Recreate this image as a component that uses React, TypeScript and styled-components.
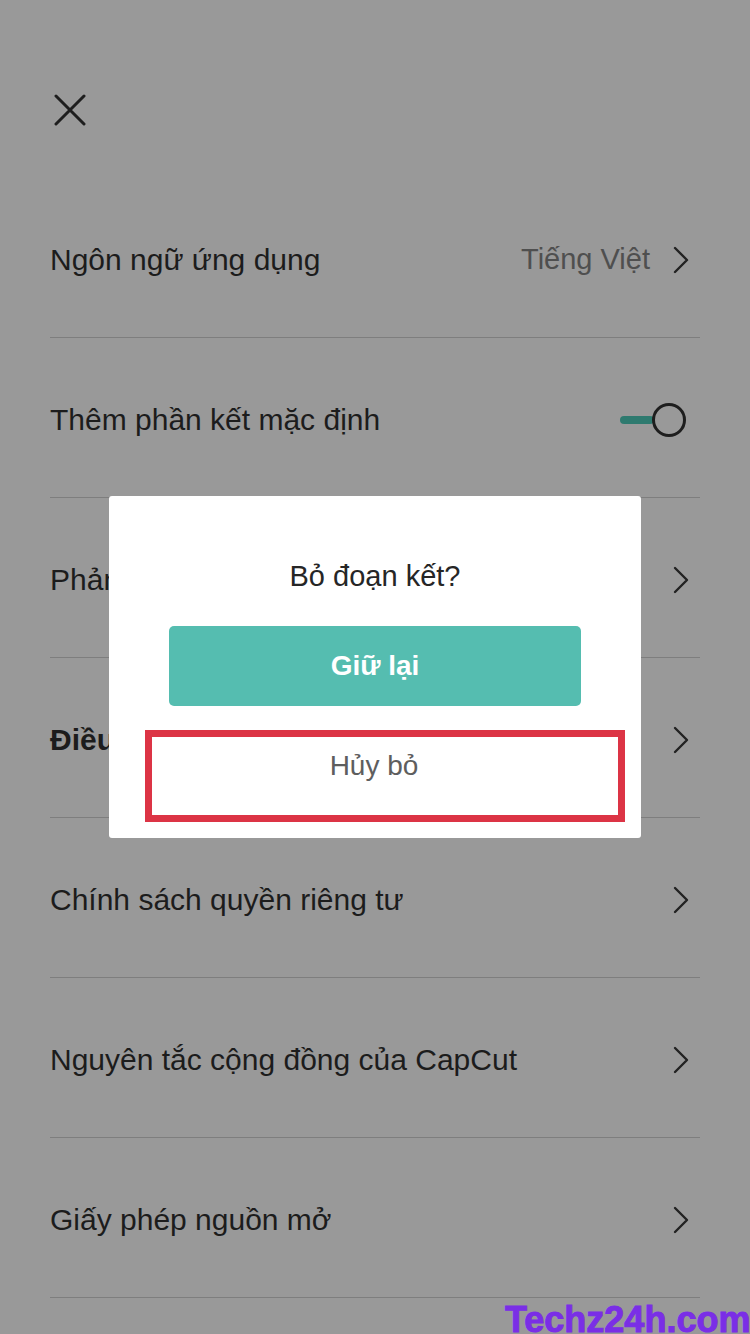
import React from "react";
import styled, { createGlobalStyle } from "styled-components";

const Global = createGlobalStyle`
  html, body { margin: 0; padding: 0; background: #999999; }
  body { font-family: "Liberation Sans", Arial, sans-serif; }
  * { box-sizing: border-box; }
`;

const Page = styled.div`
  position: relative;
  width: 750px;
  height: 1334px;
  overflow: hidden;
  background: #999999;
`;

const Header = styled.div`
  height: 178px;
  padding: 94px 0 0 54px;
`;

const CloseBtn = styled.div`
  width: 32px;
  height: 32px;
`;

const List = styled.div`
  padding: 0 50px;
`;

const Row = styled.div`
  display: flex;
  align-items: center;
  height: 160px;
  padding-top: 4px;
  border-bottom: 1px solid #7e7e7e;
`;

const Label = styled.div<{ $bold?: boolean }>`
  flex: 1;
  font-size: 30px;
  color: #1c1c1c;
  font-weight: ${(p) => (p.$bold ? 700 : 400)};
`;

const Value = styled.div`
  font-size: 29px;
  color: #4f4f4f;
  margin-right: 22px;
`;

const ChevronWrap = styled.div`
  width: 18px;
  height: 28px;
  margin-right: 10px;
  display: flex;
`;

const Toggle = styled.div`
  position: relative;
  width: 66px;
  height: 36px;
  margin-right: 14px;
`;

const Track = styled.div`
  position: absolute;
  left: 0;
  top: 14px;
  width: 34px;
  height: 8px;
  border-radius: 4px;
  background: #2e7a6f;
`;

const Knob = styled.div`
  position: absolute;
  right: 0;
  top: 1px;
  width: 34px;
  height: 34px;
  border-radius: 50%;
  border: 3px solid #1e1e1e;
`;

const Modal = styled.div`
  position: absolute;
  left: 109px;
  top: 496px;
  width: 532px;
  height: 342px;
  background: #ffffff;
  border-radius: 3px;
  display: flex;
  flex-direction: column;
  align-items: center;
  padding-top: 60px;
`;

const Title = styled.div`
  font-size: 29px;
  color: #262626;
  height: 40px;
  line-height: 40px;
`;

const KeepButton = styled.div`
  margin-top: 30px;
  width: 412px;
  height: 80px;
  background: #55bdb0;
  border-radius: 5px;
  color: #ffffff;
  font-size: 28px;
  font-weight: 700;
  display: flex;
  align-items: center;
  justify-content: center;
`;

const CancelBox = styled.div`
  margin-top: 24px;
  margin-left: 20px;
  width: 480px;
  height: 92px;
  border: 7px solid #dc3445;
  color: #5e5e5e;
  font-size: 28px;
  display: flex;
  align-items: center;
  justify-content: center;
  padding: 0 22px 20px 0;
`;

const Watermark = styled.div`
  position: absolute;
  left: 505px;
  bottom: -6px;
  font-family: "Liberation Sans", Arial, sans-serif;
  font-weight: 700;
  font-size: 36px;
  line-height: 40px;
  color: #7a2ee6;
  -webkit-text-stroke: 1px #7a2ee6;
  white-space: nowrap;
`;

const Chevron = () => (
  <ChevronWrap>
    <svg width="18" height="28" viewBox="0 0 18 28">
      <path d="M3 2 L15 14 L3 26" fill="none" stroke="#222" strokeWidth="2.4" strokeLinecap="round" strokeLinejoin="round" />
    </svg>
  </ChevronWrap>
);

const rows = [
  { label: "Ngôn ngữ ứng dụng", value: "Tiếng Việt" },
  { label: "Thêm phần kết mặc định", toggle: true },
  { label: "Phản hồi" },
  { label: "Điều khoản", bold: true },
  { label: "Chính sách quyền riêng tư" },
  { label: "Nguyên tắc cộng đồng của CapCut" },
  { label: "Giấy phép nguồn mở" },
];

export default function App() {
  return (
    <Page>
      <Global />
      <Header>
        <CloseBtn>
          <svg width="32" height="32" viewBox="0 0 32 32">
            <path d="M2 2 L30 30 M30 2 L2 30" stroke="#1e1e1e" strokeWidth="3" strokeLinecap="round" />
          </svg>
        </CloseBtn>
      </Header>
      <List>
        {rows.map((r) => (
          <Row key={r.label}>
            <Label $bold={r.bold}>{r.label}</Label>
            {r.value && <Value>{r.value}</Value>}
            {r.toggle ? (
              <Toggle>
                <Track />
                <Knob />
              </Toggle>
            ) : (
              <Chevron />
            )}
          </Row>
        ))}
      </List>
      <Modal>
        <Title>Bỏ đoạn kết?</Title>
        <KeepButton>Giữ lại</KeepButton>
        <CancelBox>Hủy bỏ</CancelBox>
      </Modal>
      <Watermark>Techz24h.com</Watermark>
    </Page>
  );
}
